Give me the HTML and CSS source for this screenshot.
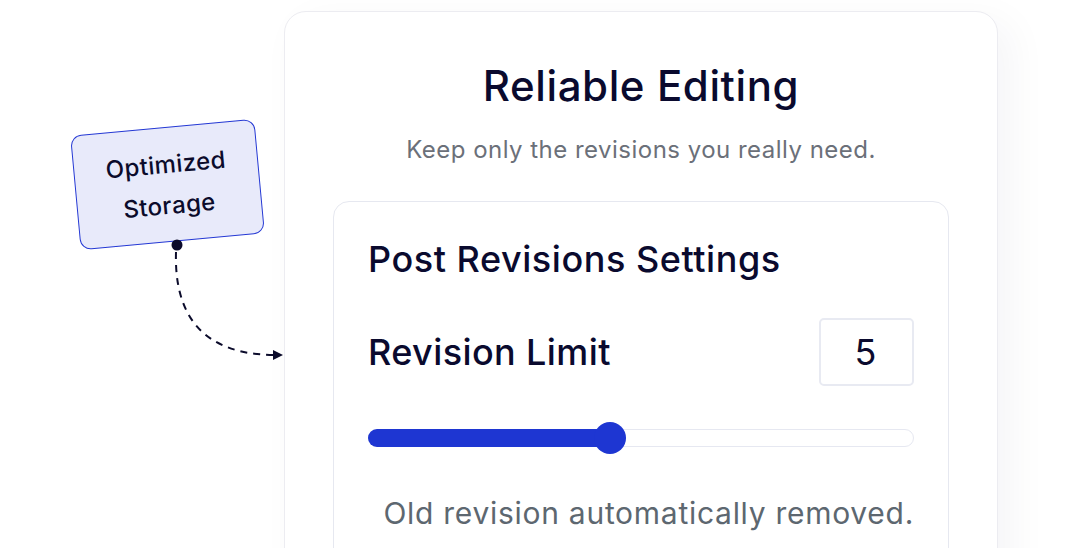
FILE: index.html
```html
<!DOCTYPE html>
<html lang="en">
<head>
<meta charset="utf-8">
<title>Reliable Editing</title>
<link rel="stylesheet" href="styles.css">
</head>
<body>
<div class="page">
  <section class="card">
    <h1 class="title">Reliable Editing</h1>
    <p class="subtitle">Keep only the revisions you really need.</p>
    <div class="panel">
      <h2 class="panel-title">Post Revisions Settings</h2>
      <div class="limit-row">
        <span class="limit-label">Revision Limit</span>
        <span class="limit-input">5</span>
      </div>
      <div class="slider">
        <div class="slider-fill" style="width: 241px"></div>
        <div class="slider-thumb" style="left: 241px"></div>
      </div>
      <p class="note">Old revision automatically removed.</p>
    </div>
  </section>

  <div class="tag">Optimized<br>Storage</div>

  <svg class="connector" width="1065" height="548" viewBox="0 0 1065 548" aria-hidden="true">
    <path d="M176 252 C 174 318, 205 354, 273 355" fill="none" stroke="#0b0b2b" stroke-width="2" stroke-dasharray="7 6"/>
    <polygon points="273,350 283,355 273,360" fill="#0b0b2b"/>
    <circle cx="177" cy="245" r="5.5" fill="#0b0b2b"/>
  </svg>
</div>
</body>
</html>
```

FILE: styles.css
```css
* { box-sizing: border-box; }

html, body {
  margin: 0;
  padding: 0;
  background: #ffffff;
}

body {
  font-family: Inter, "Noto Sans", "Liberation Sans", sans-serif;
  color: #0a0a2e;
}

.page {
  position: relative;
  width: 1065px;
  height: 548px;
  overflow: hidden;
  padding: 11px 0 0 284px;
}

.card {
  width: 714px;
  min-height: 620px;
  border: 1px solid #ececf1;
  border-radius: 22px;
  background: #ffffff;
  box-shadow: 14px 10px 40px rgba(30, 30, 70, 0.045);
  padding: 49px 48px 0 48px;
  display: flex;
  flex-direction: column;
  align-items: stretch;
}

.title {
  margin: 0;
  font-size: 42px;
  line-height: 50px;
  font-weight: 500;
  text-align: center;
  color: #0a0a2e;
  letter-spacing: 0.6px;
}

.subtitle {
  margin: 24px 0 0 0;
  font-size: 24px;
  line-height: 29px;
  font-weight: 400;
  text-align: center;
  color: #6b7079;
  letter-spacing: 0.48px;
}

.panel {
  margin-top: 37px;
  border: 1.5px solid #e6e8f0;
  border-radius: 16px;
  padding: 36px 34px 60px 34px;
  min-height: 420px;
  display: flex;
  flex-direction: column;
}

.panel-title {
  margin: 0;
  font-size: 36px;
  line-height: 43px;
  font-weight: 500;
  color: #0a0a2e;
  letter-spacing: 0.55px;
}

.limit-row {
  margin-top: 37px;
  display: flex;
  align-items: center;
  justify-content: space-between;
}

.limit-label {
  font-size: 36px;
  line-height: 43px;
  font-weight: 500;
  color: #0a0a2e;
  letter-spacing: 0.4px;
}

.limit-input {
  width: 95px;
  height: 68px;
  border: 2px solid #e8eaf2;
  border-radius: 5px;
  display: flex;
  align-items: center;
  justify-content: center;
  font-size: 36px;
  font-weight: 400;
  color: #0a0a2e;
  padding-right: 2px;
}

.slider {
  position: relative;
  margin-top: 43px;
  height: 18px;
  border: 1px solid #e6e8f1;
  border-radius: 9px;
  background: #ffffff;
}

.slider-fill {
  position: absolute;
  left: -1px;
  top: -1px;
  height: 18px;
  border-radius: 9px 0 0 9px;
  background: #1e36d2;
}

.slider-thumb {
  position: absolute;
  top: 50%;
  width: 32px;
  height: 32px;
  margin-left: -16px;
  margin-top: -16px;
  border-radius: 50%;
  background: #1e36d2;
}

.note {
  margin: 48px 0 0 0;
  font-size: 30px;
  line-height: 36px;
  font-weight: 400;
  color: #5d6770;
  text-align: right;
  letter-spacing: 0.72px;
}

.tag {
  position: absolute;
  left: 75px;
  top: 127px;
  width: 185px;
  height: 115px;
  transform: rotate(-5.3deg);
  background: #e8eafa;
  border: 1.5px solid #2438d4;
  border-radius: 11px;
  display: flex;
  align-items: center;
  justify-content: center;
  text-align: center;
  font-size: 24px;
  line-height: 41px;
  font-weight: 500;
  color: #0b0b2b;
  letter-spacing: 0.4px;
}

.connector {
  position: absolute;
  left: 0;
  top: 0;
  pointer-events: none;
}
```
